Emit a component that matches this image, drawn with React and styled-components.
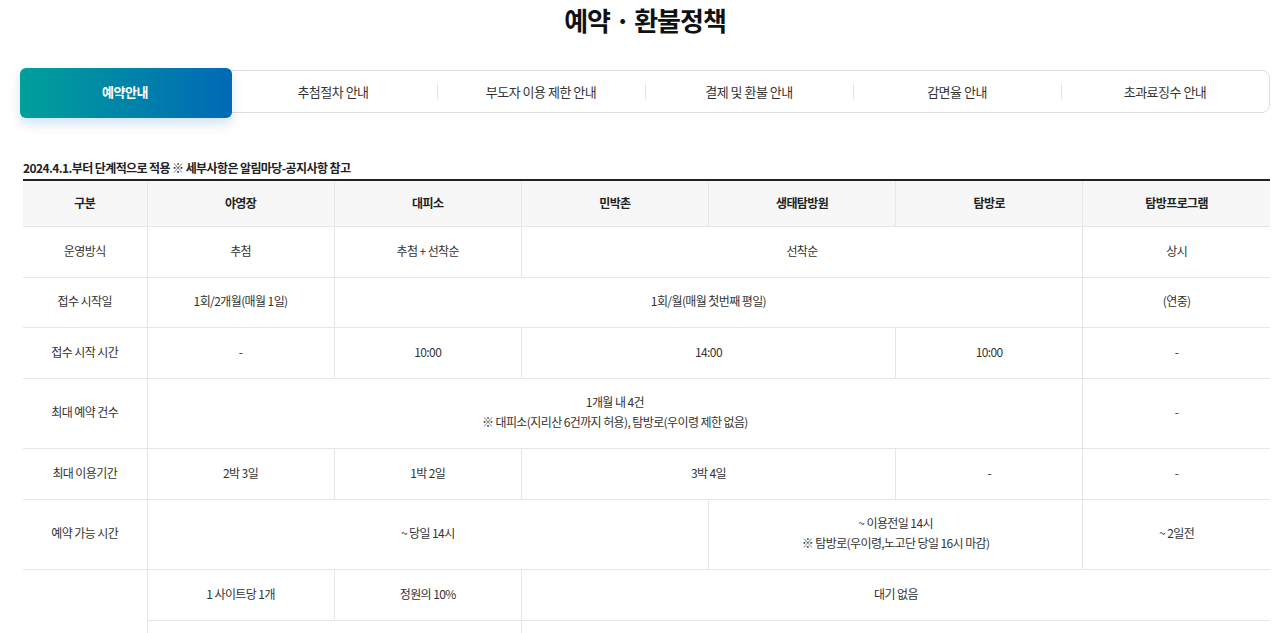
import styled, { createGlobalStyle, css } from "styled-components";

const GlobalStyle = createGlobalStyle`
  html, body {
    margin: 0;
    padding: 0;
    background: #fff;
  }
  body {
    font-family: "Noto Sans CJK KR", "Noto Sans", sans-serif;
    color: #333;
  }
`;

const Page = styled.div`
  padding: 0 10px 40px 20px;
`;

const Title = styled.h2`
  margin: 0;
  padding-top: 2px;
  text-align: center;
  font-size: 26px;
  line-height: 36px;
  font-weight: 700;
  letter-spacing: -1px;
  color: #111;
`;

const Tabs = styled.ul`
  list-style: none;
  margin: 32px 0 0;
  padding: 0;
  display: flex;
  height: 41px;
  border: 1px solid #ddd;
  border-radius: 8px;
`;

const Tab = styled.li`
  position: relative;
  flex: 1;
  display: flex;
  align-items: center;
  justify-content: center;
  padding-bottom: 1px;
  font-size: 13px;
  letter-spacing: -0.5px;
  color: #333;

  & + &::after {
    content: "";
    position: absolute;
    left: 0;
    top: 12px;
    height: 17px;
    border-left: 1px solid #e6e6e6;
  }

  ${(p) =>
    p.$active &&
    css`
      color: #fff;
      font-weight: 700;
      &::before {
        content: "";
        position: absolute;
        inset: -3px -3px -6px -1px;
        border-radius: 6px;
        background: linear-gradient(90deg, #00a09a 0%, #0069b6 100%);
        box-shadow: 0 6px 12px rgba(0, 105, 200, 0.18);
      }
      & + li::after {
        display: none;
      }
    `}
`;

const TabLabel = styled.span`
  position: relative;
`;

const TableWrap = styled.div`
  margin: 47px 0 0 3px;
`;

const Caption = styled.p`
  margin: 0;
  font-size: 12px;
  line-height: 16px;
  font-weight: 700;
  letter-spacing: -0.6px;
  color: #222;
  padding-bottom: 3px;
`;

const Table = styled.table`
  width: 100%;
  border-collapse: collapse;
  table-layout: fixed;
  border-top: 2px solid #222;
`;

const Th = styled.th`
  background: #f7f7f7;
  font-size: 12px;
  font-weight: 700;
  letter-spacing: -0.6px;
  color: #222;
  padding: 12px 5px 13px;
  line-height: 20px;
  border: 1px solid #e6e6e6;
  border-top: none;
  &:first-child { border-left: none; }
  &:last-child { border-right: none; }
`;

const Td = styled.td`
  height: ${(p) => (p.$tall ? 70.5 : 50.5)}px;
  box-sizing: border-box;
  font-size: 12px;
  letter-spacing: -0.6px;
  color: #333;
  text-align: center;
  vertical-align: middle;
  padding: 0 5px 2px;
  line-height: 20px;
  border: 1px solid #e6e6e6;
  &:first-child { border-left: none; }
  &:last-child { border-right: none; }
`;

const heads = ["구분", "야영장", "대피소", "민박촌", "생태탐방원", "탐방로", "탐방프로그램"];

const tabs = ["예약안내", "추첨절차 안내", "부도자 이용 제한 안내", "결제 및 환불 안내", "감면율 안내", "초과료징수 안내"];

export default function App() {
  return (
    <Page>
      <GlobalStyle />
      <Title>예약 · 환불정책</Title>
      <Tabs>
        {tabs.map((t, i) => (
          <Tab key={t} $active={i === 0}>
            <TabLabel>{t}</TabLabel>
          </Tab>
        ))}
      </Tabs>
      <TableWrap>
        <Caption>2024.4.1.부터 단계적으로 적용 ※ 세부사항은 알림마당-공지사항 참고</Caption>
        <Table>
          <colgroup>
            <col style={{ width: 124 }} />
            <col />
            <col />
            <col />
            <col />
            <col />
            <col />
          </colgroup>
          <thead>
            <tr>
              {heads.map((h) => (
                <Th key={h}>{h}</Th>
              ))}
            </tr>
          </thead>
          <tbody>
            <tr>
              <Td>운영방식</Td>
              <Td>추첨</Td>
              <Td>추첨 + 선착순</Td>
              <Td colSpan={3}>선착순</Td>
              <Td>상시</Td>
            </tr>
            <tr>
              <Td>접수 시작일</Td>
              <Td>1회/2개월(매월 1일)</Td>
              <Td colSpan={4}>1회/월(매월 첫번째 평일)</Td>
              <Td>(연중)</Td>
            </tr>
            <tr>
              <Td>접수 시작 시간</Td>
              <Td>-</Td>
              <Td>10:00</Td>
              <Td colSpan={2}>14:00</Td>
              <Td>10:00</Td>
              <Td>-</Td>
            </tr>
            <tr>
              <Td $tall>최대 예약 건수</Td>
              <Td $tall colSpan={5}>
                1개월 내 4건
                <br />※ 대피소(지리산 6건까지 허용), 탐방로(우이령 제한 없음)
              </Td>
              <Td $tall>-</Td>
            </tr>
            <tr>
              <Td>최대 이용기간</Td>
              <Td>2박 3일</Td>
              <Td>1박 2일</Td>
              <Td colSpan={2}>3박 4일</Td>
              <Td>-</Td>
              <Td>-</Td>
            </tr>
            <tr>
              <Td $tall>예약 가능 시간</Td>
              <Td $tall colSpan={3}>~ 당일 14시</Td>
              <Td $tall colSpan={2}>
                ~ 이용전일 14시
                <br />※ 탐방로(우이령,노고단 당일 16시 마감)
              </Td>
              <Td $tall>~ 2일전</Td>
            </tr>
            <tr>
              <Td rowSpan={2}></Td>
              <Td>1 사이트당 1개</Td>
              <Td>정원의 10%</Td>
              <Td colSpan={4}>대기 없음</Td>
            </tr>
            <tr>
              <Td colSpan={2}></Td>
              <Td colSpan={4}></Td>
            </tr>
          </tbody>
        </Table>
      </TableWrap>
    </Page>
  );
}
